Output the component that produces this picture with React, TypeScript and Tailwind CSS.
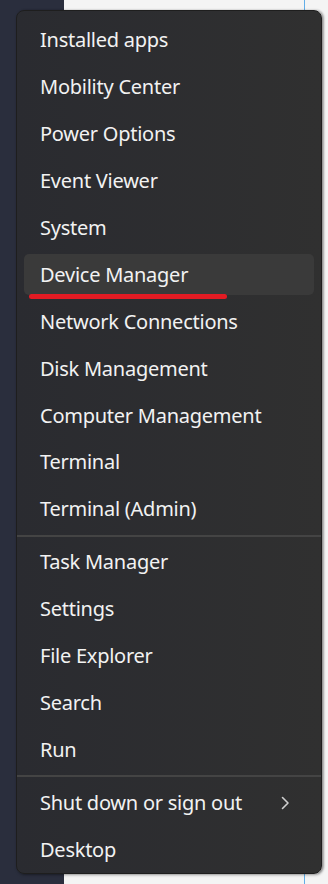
import React from "react";

type Item = { label: string; highlight?: boolean; chevron?: boolean };

const groups: Item[][] = [
  [
    { label: "Installed apps" },
    { label: "Mobility Center" },
    { label: "Power Options" },
    { label: "Event Viewer" },
    { label: "System" },
    { label: "Device Manager", highlight: true },
    { label: "Network Connections" },
    { label: "Disk Management" },
    { label: "Computer Management" },
    { label: "Terminal" },
    { label: "Terminal (Admin)" },
  ],
  [
    { label: "Task Manager" },
    { label: "Settings" },
    { label: "File Explorer" },
    { label: "Search" },
    { label: "Run" },
  ],
  [{ label: "Shut down or sign out", chevron: true }, { label: "Desktop" }],
];

function Row({ item }: { item: Item }) {
  return (
    <div className="relative h-[47px] px-[7px] flex items-center">
      <div
        className={
          "flex-1 h-[41px] rounded-[5px] flex items-center pl-[16px] pr-[24px] " +
          (item.highlight ? "bg-[#3a3a3a]" : "")
        }
      >
        <span className="flex-1 text-[20px] leading-none text-[#f2f2f2] tracking-[-0.25px]">
          {item.label}
        </span>
        {item.chevron && (
          <svg width="9" height="14" viewBox="0 0 9 14" className="mt-[1px]">
            <path
              d="M1.5 1.5 L7 7 L1.5 12.5"
              fill="none"
              stroke="#cfcfcf"
              strokeWidth="1.6"
              strokeLinecap="round"
              strokeLinejoin="round"
            />
          </svg>
        )}
      </div>
      {item.highlight && (
        <div className="absolute left-[12px] top-[43px] w-[198px] h-[5px] rounded-full bg-[#e31b23]" />
      )}
    </div>
  );
}

export default function App() {
  return (
    <div
      className="relative w-[328px] h-[884px] flex overflow-hidden"
      style={{ fontFamily: '"Noto Sans", "Open Sans", sans-serif' }}
    >
      <div className="w-[64px] h-full bg-[#2a2e3d]" />
      <div className="flex-1 h-full bg-[#f4f4f4] flex">
        <div className="w-[240px]" />
        <div className="w-[1px] h-full bg-[#62aee8]" />
      </div>
      <div className="absolute left-[16px] top-[10px] w-[306px] h-[864px] rounded-[8px] border border-[#1e1e1e] bg-gradient-to-r from-[#2a2b30] to-[#303030] shadow-[1px_1px_3px_rgba(0,0,0,0.35),2px_0_2px_rgba(0,0,0,0.2)] pt-[6px] flex flex-col">
        {groups.map((g, gi) => (
          <React.Fragment key={gi}>
            {gi > 0 && <div className="h-[2px] my-[2px] bg-[#444444]" />}
            {g.map((it) => (
              <Row key={it.label} item={it} />
            ))}
          </React.Fragment>
        ))}
      </div>
    </div>
  );
}
